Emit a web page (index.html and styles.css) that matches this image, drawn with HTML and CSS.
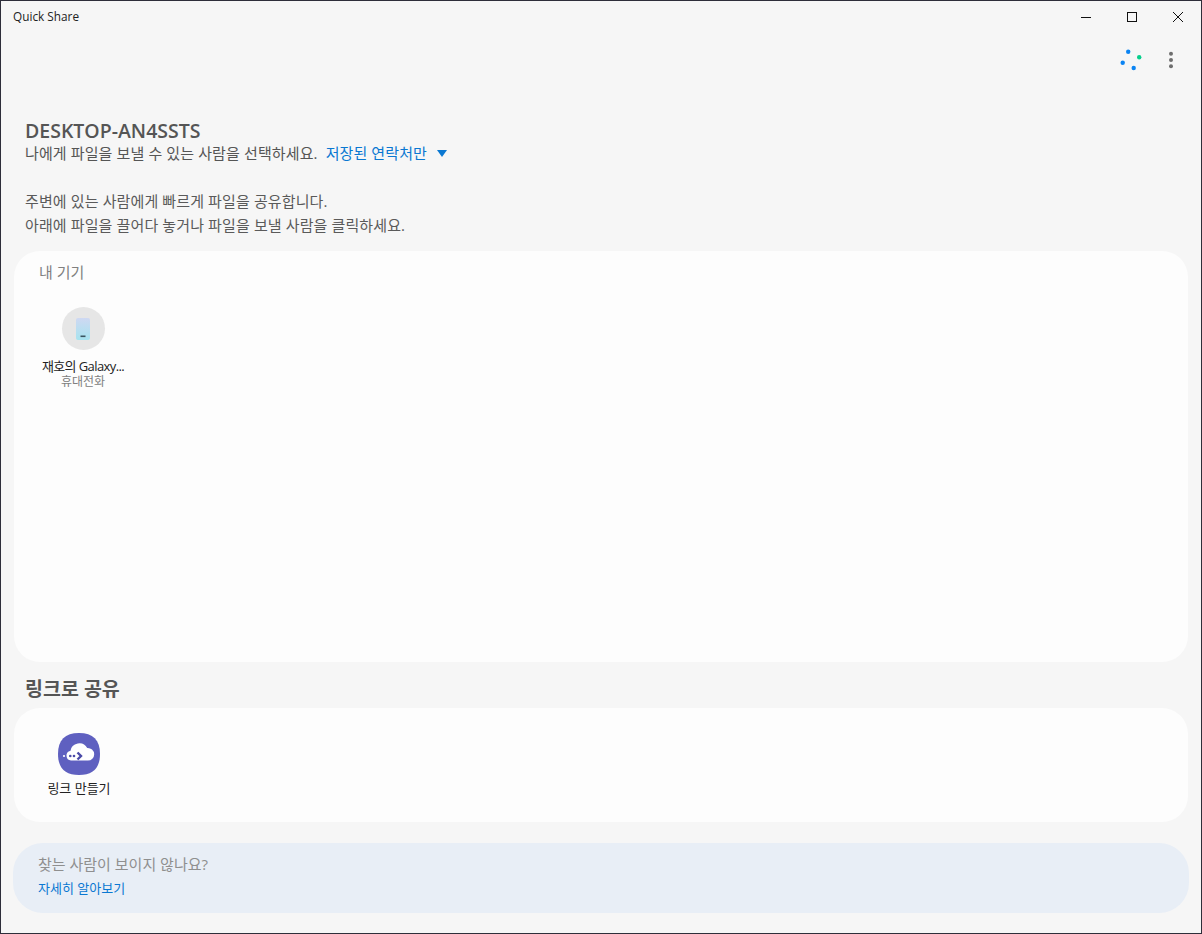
FILE: index.html
```html
<!DOCTYPE html>
<html lang="ko">
<head>
<meta charset="utf-8">
<title>Quick Share</title>
<link rel="stylesheet" href="styles.css">
</head>
<body>
<div class="window">
  <header class="titlebar">
    <span class="app-title">Quick Share</span>
    <div class="win-controls">
      <svg class="win-btn" width="12" height="12" viewBox="0 0 12 12"><path d="M1 6.5h10" stroke="#111" fill="none"/></svg>
      <svg class="win-btn" width="12" height="12" viewBox="0 0 12 12"><rect x="1.5" y="1.5" width="9" height="9" stroke="#111" fill="none"/></svg>
      <svg class="win-btn" width="12" height="12" viewBox="0 0 12 12"><path d="M1 1l10 10M11 1L1 11" stroke="#111" fill="none"/></svg>
    </div>
  </header>
  <div class="toolbar">
    <svg class="spinner" width="24" height="24" viewBox="0 0 24 24">
      <circle cx="9.2" cy="3.7" r="2.2" fill="#0b84f3"/>
      <circle cx="20.2" cy="9.3" r="2.2" fill="#06cf8c"/>
      <circle cx="3.7" cy="14.7" r="2.2" fill="#0b84f3"/>
      <circle cx="14.7" cy="20" r="2.2" fill="#0b84f3"/>
    </svg>
    <svg class="more" width="6" height="18" viewBox="0 0 6 18">
      <circle cx="3" cy="2.7" r="2" fill="#6e6e6e"/>
      <circle cx="3" cy="9" r="2" fill="#6e6e6e"/>
      <circle cx="3" cy="15.3" r="2" fill="#6e6e6e"/>
    </svg>
  </div>
  <section class="intro">
    <h1 class="device-name">DESKTOP-AN4SSTS</h1>
    <div class="visibility">
      <span>나에게 파일을 보낼 수 있는 사람을 선택하세요.</span>
      <span class="visibility-link">저장된 연락처만</span>
      <svg class="caret" width="10" height="7" viewBox="0 0 10 7"><path d="M0 0h10L5 7z" fill="#0a78d2"/></svg>
    </div>
    <p class="desc">주변에 있는 사람에게 빠르게 파일을 공유합니다.<br>아래에 파일을 끌어다 놓거나 파일을 보낼 사람을 클릭하세요.</p>
  </section>
  <section class="card card-devices">
    <h2 class="card-label">내 기기</h2>
    <div class="tile">
      <div class="avatar">
        <svg width="14" height="22" viewBox="0 0 14 22">
          <defs><linearGradient id="ph" x1="0" y1="0" x2="0" y2="1"><stop offset="0" stop-color="#cfd8f2"/><stop offset="1" stop-color="#a6e3ef"/></linearGradient></defs>
          <rect width="14" height="22" rx="2" fill="url(#ph)"/>
          <rect x="4.5" y="17.5" width="5" height="1.6" fill="#3a5560"/>
        </svg>
      </div>
      <div class="tile-name device-title">재호의 Galaxy...</div>
      <div class="tile-sub">휴대전화</div>
    </div>
  </section>
  <h2 class="section-title">링크로 공유</h2>
  <section class="card card-link">
    <div class="link-tile">
      <svg class="link-icon" width="42" height="42" viewBox="0 0 42 42">
        <path d="M21 0C35 0 42 7 42 21S35 42 21 42 0 35 0 21 7 0 21 0z" fill="#5f60c0"/>
        <path d="M13 27.5a4.8 4.8 0 0 1-.6-9.5 9 9 0 0 1 16.8-3 6.5 6.5 0 0 1 7 6.2 6.3 6.3 0 0 1-6.3 6.3z" fill="#fff"/>
        <path d="M9 23a3.5 3.5 0 0 1 4-4.5v8A3.5 3.5 0 0 1 9 23z" fill="#fff"/>
        <circle cx="6" cy="23" r="1.1" fill="#fff"/>
        <circle cx="12.3" cy="23" r="1.3" fill="#4a4aa8"/>
        <circle cx="16" cy="23" r="1.3" fill="#4a4aa8"/>
        <path d="M19.5 19.5l3.5 3.5-3.5 3.5" fill="none" stroke="#4a4aa8" stroke-width="2.4"/>
      </svg>
      <div class="tile-name">링크 만들기</div>
    </div>
  </section>
  <section class="help">
    <div class="help-text">찾는 사람이 보이지 않나요?</div>
    <a class="help-link">자세히 알아보기</a>
  </section>
</div>
</body>
</html>
```

FILE: styles.css
```css
* { box-sizing: border-box; }
html, body { margin: 0; padding: 0; }
body {
  width: 1202px;
  height: 934px;
  overflow: hidden;
  background: #f6f6f6;
  font-family: "Open Sans", "Noto Sans CJK KR", sans-serif;
}
.window {
  width: 1202px;
  height: 934px;
  display: flex;
  flex-direction: column;
  background: #f6f6f6;
  border: 1px solid #2e2e3a;
}
.titlebar {
  height: 31px;
  flex: none;
  display: flex;
  align-items: center;
  justify-content: space-between;
  padding-left: 12px;
}
.app-title { font-size: 11.8px; color: #222; margin-top: -1px; }
.win-controls { display: flex; gap: 34px; padding-right: 17px; margin-top: 1px; }
.win-btn { display: block; }
.toolbar {
  height: 26px;
  flex: none;
  margin-top: 15px;
  display: flex;
  align-items: center;
  justify-content: flex-end;
  gap: 25px;
  padding-right: 27px;
}
.spinner, .more { display: block; }
.intro { padding: 0 24px; margin-top: 43px; color: #555; }
.device-name {
  margin: 0;
  font-size: 19.5px;
  font-weight: 600;
  line-height: 24px;
  padding-top: 3px;
}
.visibility {
  display: flex;
  align-items: center;
  font-size: 15px;
  line-height: 20px;
  letter-spacing: 0.12px;
  color: #555;
}
.visibility-link { color: #0a78d2; margin-left: 8px; letter-spacing: 0.1px; }
.caret { margin-left: 10px; margin-top: 1px; }
.desc {
  margin: 26px 0 0;
  font-size: 15px;
  line-height: 24px;
  letter-spacing: 0.12px;
  color: #5a5a5a;
}
.card { background: #fdfdfd; margin-left: 13px; margin-right: 13px; flex: none; }
.card-devices {
  height: 411px;
  margin-top: 14px;
  border-radius: 26px;
  padding: 10px 0 0 25px;
}
.card-label {
  margin: 0;
  font-size: 15px;
  font-weight: 400;
  line-height: 22px;
  color: #808080;
}
.tile { width: 88px; margin: 24px 0 0 0; display: flex; flex-direction: column; align-items: center; }
.avatar {
  width: 43px;
  height: 43px;
  border-radius: 50%;
  background: #e6e6e6;
  display: flex;
  align-items: center;
  justify-content: center;
}
.avatar svg { display: block; }
.tile-name { font-size: 13px; line-height: 16px; color: #222; margin-top: 8px; white-space: nowrap; }
.device-title { letter-spacing: -0.6px; }
.tile-sub { font-size: 12px; line-height: 16px; color: #808080; }
.section-title {
  margin: 14px 0 0;
  padding-left: 24px;
  height: 32px;
  font-size: 19.5px;
  font-weight: 700;
  line-height: 26px;
  color: #555;
}
.card-link {
  height: 114px;
  border-radius: 26px;
  padding: 25px 0 0 34px;
}
.link-tile { width: 62px; display: flex; flex-direction: column; align-items: center; }
.link-icon { display: block; }
.link-tile .tile-name { margin-top: 5px; }
.help {
  margin: 21px 12px 0;
  height: 70px;
  flex: none;
  background: #e8eef6;
  border-radius: 30px;
  padding: 10px 0 0 25px;
}
.help-text { font-size: 15px; line-height: 22px; color: #8f8f8f; }
.help-link { display: block; font-size: 13px; line-height: 18px; margin-top: 4px; color: #0a78d2; }
```
